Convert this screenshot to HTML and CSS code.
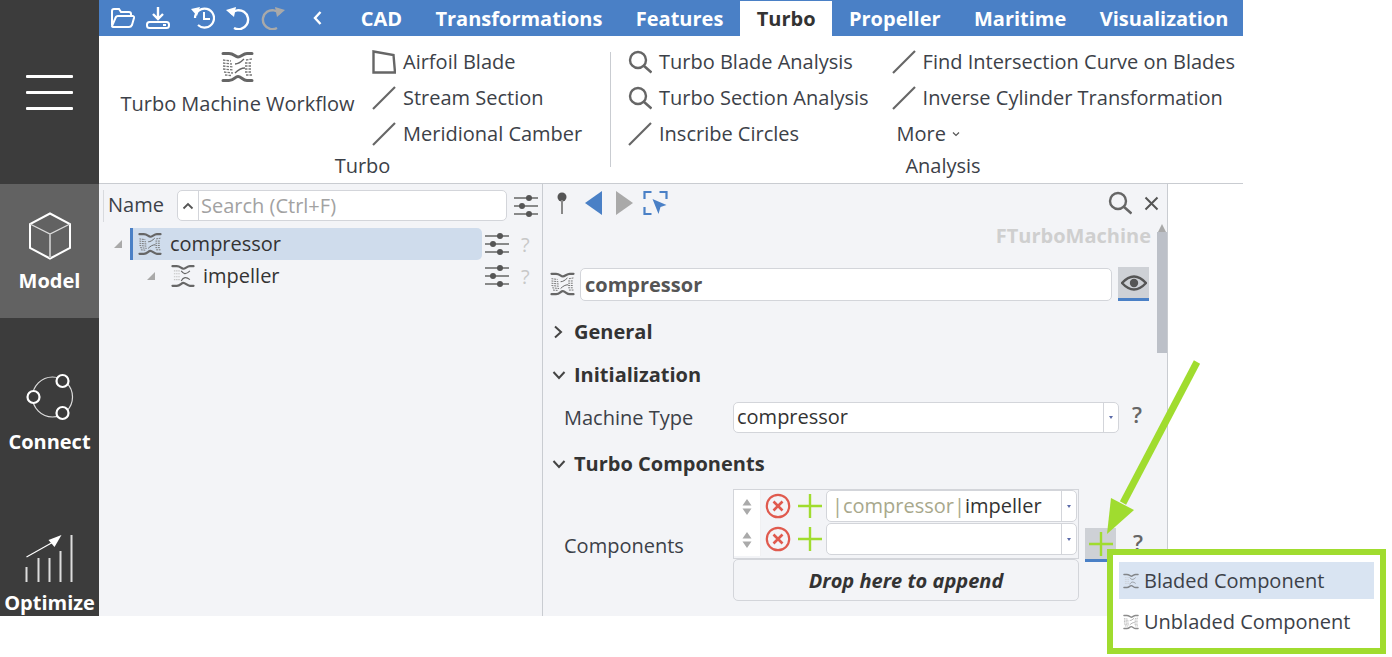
FILE: index.html
```html
<!DOCTYPE html>
<html lang="en">
<head>
<meta charset="utf-8">
<title>Turbo</title>
<link rel="stylesheet" href="styles.css">
</head>
<body>
<svg class="defs" width="0" height="0" aria-hidden="true">
  <symbol id="blade" viewBox="0 0 33 32">
    <path d="M2 2.500h6c5 0 6 3.500 9 3.500s5-3.500 9-3.500h5M2 29.500h6c5 0 6-4 9-4s5 4 9 4h5" fill="none" stroke="#666" stroke-width="3" stroke-linecap="round"/>
    <path d="M2 9l8 1M2 12l9 1M2 15l10 1M2 18l10 1M3 21l9 1M4 24l6 .5M25 9l6-1M24 12l7 0M24 15l7 0M24 18l7 0M24 21l7 0M25 24l6 0" fill="none" stroke="#777" stroke-width="1.300" stroke-dasharray="2.500 1"/>
    <path d="M14 13c3 0 6-2 9-5M14 22c3-3 6-5 10-5" fill="none" stroke="#666" stroke-width="1.300"/>
  </symbol>
  <symbol id="blade2" viewBox="0 0 33 32">
    <path d="M2 2.500h6c5 0 6 3.500 9 3.500s5-3.500 9-3.500h5M2 29.500h6c5 0 6-4 9-4s5 4 9 4h5" fill="none" stroke="#666" stroke-width="3" stroke-linecap="round"/>
    <path d="M4 9h8M4 13h9M4 17h9M4 21h8" fill="none" stroke="#c4c4c4" stroke-width="1.500" stroke-dasharray="2 1"/>
    <path d="M14 9c3 4 6 6 12 0M14 23c3-6 7-6 12-2" fill="none" stroke="#666" stroke-width="1.500"/>
  </symbol>
  <symbol id="line" viewBox="0 0 24 24"><path d="M1 23 23 1" stroke="#666" stroke-width="2.200" fill="none"/></symbol>
  <symbol id="lens" viewBox="0 0 24 24"><circle cx="10" cy="10" r="8" fill="none" stroke="#666" stroke-width="2.400"/><path d="m15.500 15.500 8 7" stroke="#666" stroke-width="2.600" fill="none"/></symbol>
  <symbol id="sliders" viewBox="0 0 24 24"><path d="M0 4h24M0 12h24M0 20h24" stroke="#666" stroke-width="1.600"/><circle cx="15" cy="4" r="3" fill="#555"/><circle cx="8" cy="12" r="3" fill="#555"/><circle cx="15" cy="20" r="3" fill="#555"/></symbol>
  <symbol id="remove" viewBox="0 0 26 26"><circle cx="13" cy="13" r="11.200" fill="none" stroke="#e05a4e" stroke-width="2.200"/><path d="m8.500 8.500 9 9m0-9-9 9" stroke="#e05a4e" stroke-width="2.600"/></symbol>
  <symbol id="plus" viewBox="0 0 26 26"><path d="M13 1v24M1 13h24" stroke="#a0dc2f" stroke-width="2.400"/></symbol>
  <symbol id="updown" viewBox="0 0 12 18"><path d="M6 1 10.500 7.500H1.500ZM6 17 1.500 10.500H10.500Z" fill="#aaa"/></symbol>
</svg>

<div class="app">
  <aside class="rail">
    <div class="rail-menu"><span class="bar"></span><span class="bar"></span><span class="bar"></span></div>
    <div class="rail-item active">
      <svg class="rail-icon" width="46" height="48" viewBox="0 0 46 48"><path d="M23 1.500 43 12V36L23 46.500 3 36V12Z" fill="none" stroke="#fff" stroke-width="2"/><path d="M3 12 23 22 43 12" fill="none" stroke="#ddd" stroke-width="1.300"/><path d="M23 22v24" stroke="#bbb" stroke-width="2"/></svg>
      <span class="rail-label">Model</span>
    </div>
    <div class="rail-item connect">
      <svg class="rail-icon" width="50" height="50" viewBox="0 0 50 50"><circle cx="27.500" cy="24" r="20" fill="none" stroke="#ddd" stroke-width="1.200"/><circle cx="37.500" cy="8" r="6" fill="#3c3c3c" stroke="#fff" stroke-width="2.200"/><circle cx="8.500" cy="24" r="6" fill="#3c3c3c" stroke="#fff" stroke-width="2.200"/><circle cx="37.500" cy="40" r="6" fill="#3c3c3c" stroke="#fff" stroke-width="2.200"/></svg>
      <span class="rail-label">Connect</span>
    </div>
    <div class="rail-item optimize">
      <svg class="rail-icon" width="50" height="48" viewBox="0 0 50 48"><path d="M1.500 33V48M13.500 24V48M24.500 24V48M35.500 17V48M46.500 1V48" stroke="#ddd" stroke-width="2"/><path d="M1.500 23 30 7" stroke="#fff" stroke-width="1.200"/><path d="M36.500 1 23.500 6 29.500 13Z" fill="#fff"/></svg>
      <span class="rail-label">Optimize</span>
    </div>
  </aside>

  <div class="main">
    <header class="topbar">
      <div class="quick">
        <svg width="24" height="20" viewBox="0 0 24 20"><path d="M1 17V3q0-2 2-2h5l2 3h8q2 0 2 2v2M1 18q0 1 2 1h15q2 0 3-2l2-7q.3-2-1.500-2H7q-2 0-2.500 2Z" fill="none" stroke="#fff" stroke-width="2"/></svg>
        <svg class="q-gap1" width="24" height="22" viewBox="0 0 24 22"><path d="M12 0v11M7 7l5 5 5-5" fill="none" stroke="#fff" stroke-width="2.400"/><rect x="1" y="15" width="22" height="6" rx="2.500" fill="none" stroke="#fff" stroke-width="2"/><path d="M17 18h3" stroke="#fff" stroke-width="2"/></svg>
        <svg class="q-gap2" width="24" height="24" viewBox="0 0 24 24"><path d="M4 12a9.500 9.500 0 1 1 3 7" fill="none" stroke="#fff" stroke-width="2.200"/><path d="M0 3 9 1 6 10Z" fill="#fff"/><path d="M13 6v7h6" fill="none" stroke="#fff" stroke-width="2"/></svg>
        <svg class="q-gap3" width="24" height="24" viewBox="0 0 24 24"><path d="M5 8a9.500 9.500 0 1 1 3 14" fill="none" stroke="#fff" stroke-width="2.400"/><path d="M0 4 10 1 8 11Z" fill="#fff"/></svg>
        <svg class="q-gap3" width="24" height="24" viewBox="0 0 24 24"><path d="M19 8a9.500 9.500 0 1 0-3 14" fill="none" stroke="#a9a9a9" stroke-width="2.400"/><path d="M24 4 14 1 16 11Z" fill="#a9a9a9"/></svg>
        <svg class="q-gap4" width="9" height="14" viewBox="0 0 9 14"><path d="M7.500 1 2 7l5.500 6" fill="none" stroke="#fff" stroke-width="2.400"/></svg>
      </div>
      <nav class="tabs">
        <span class="tab">CAD</span>
        <span class="tab">Transformations</span>
        <span class="tab">Features</span>
        <span class="tab current">Turbo</span>
        <span class="tab">Propeller</span>
        <span class="tab">Maritime</span>
        <span class="tab">Visualization</span>
      </nav>
    </header>

    <section class="ribbon">
      <div class="group group-turbo">
        <div class="group-body">
          <div class="big-tool">
            <svg class="big-icon" width="33" height="32"><use href="#blade"/></svg>
            <span>Turbo Machine Workflow</span>
          </div>
          <ul class="tools">
            <li><svg width="24" height="24" viewBox="0 0 24 24"><path d="M1.500 1.500 21.500 5 23 22.500H1.500Z" fill="none" stroke="#666" stroke-width="2.400"/></svg>Airfoil Blade</li>
            <li><svg width="24" height="24"><use href="#line"/></svg>Stream Section</li>
            <li><svg width="24" height="24"><use href="#line"/></svg>Meridional Camber</li>
          </ul>
        </div>
        <div class="group-label">Turbo</div>
      </div>
      <span class="group-sep"></span>
      <div class="group group-analysis">
        <div class="group-body">
          <ul class="tools">
            <li><svg width="24" height="24"><use href="#lens"/></svg>Turbo Blade Analysis</li>
            <li><svg width="24" height="24"><use href="#lens"/></svg>Turbo Section Analysis</li>
            <li><svg width="24" height="24"><use href="#line"/></svg>Inscribe Circles</li>
          </ul>
          <ul class="tools tools-b">
            <li><svg width="24" height="24"><use href="#line"/></svg>Find Intersection Curve on Blades</li>
            <li><svg width="24" height="24"><use href="#line"/></svg>Inverse Cylinder Transformation</li>
            <li class="more">More <svg width="8" height="6" viewBox="0 0 8 6"><path d="m1 1.500 3 3 3-3" fill="none" stroke="#555" stroke-width="1.200"/></svg></li>
          </ul>
        </div>
        <div class="group-label">Analysis</div>
      </div>
    </section>

    <section class="panes">
      <div class="tree-pane">
        <div class="tree-head">
          <span class="tree-name">Name</span>
          <div class="search">
            <span class="search-btn"><svg width="12" height="8" viewBox="0 0 12 8"><path d="m1.500 6.500 4.500-4.500 4.500 4.500" fill="none" stroke="#555" stroke-width="1.800"/></svg></span>
            <span class="search-text">Search (Ctrl+F)</span>
          </div>
          <svg width="24" height="24"><use href="#sliders"/></svg>
        </div>
        <div class="tree-row level0">
          <span class="tri"></span>
          <div class="tree-sel">
            <svg width="24" height="24"><use href="#blade"/></svg>
            <span class="tree-text">compressor</span>
          </div>
          <svg class="row-sliders" width="24" height="24"><use href="#sliders"/></svg>
          <span class="q">?</span>
        </div>
        <div class="tree-row level1">
          <span class="tri"></span>
          <div class="tree-plain">
            <svg width="24" height="24"><use href="#blade2"/></svg>
            <span class="tree-text">impeller</span>
          </div>
          <svg class="row-sliders" width="24" height="24"><use href="#sliders"/></svg>
          <span class="q">?</span>
        </div>
      </div>

      <div class="detail-pane">
        <div class="detail">
          <div class="d-toolbar">
            <svg width="10" height="22" viewBox="0 0 10 22"><circle cx="5" cy="5" r="4.500" fill="#555"/><path d="M5 8v14" stroke="#888" stroke-width="2"/></svg>
            <svg class="d-left" width="17" height="24" viewBox="0 0 17 24"><path d="M17 0V24L0 12Z" fill="#4a80c6"/></svg>
            <svg class="d-right" width="17" height="24" viewBox="0 0 17 24"><path d="M0 0V24L17 12Z" fill="#a9a9a9"/></svg>
            <svg class="d-select" width="25" height="24" viewBox="0 0 24 24"><path d="M1 8V1H8M16 1H23V8M1 16V23H8" fill="none" stroke="#4a80c6" stroke-width="2.200"/><path d="M9 8 23 14 17 16 15 23Z" fill="#4a80c6"/></svg>
            <span class="spacer"></span>
            <svg width="24" height="24"><use href="#lens"/></svg>
            <svg class="d-close" width="15" height="15" viewBox="0 0 15 15"><path d="m1.500 1.500 12 12m0-12-12 12" stroke="#555" stroke-width="2"/></svg>
          </div>
          <div class="class-name">FTurboMachine</div>
          <div class="name-row">
            <svg width="25" height="26"><use href="#blade"/></svg>
            <div class="name-input">compressor</div>
            <span class="eye-btn"><svg width="26" height="16" viewBox="0 0 26 16"><path d="M1 8q12-13 24 0-12 13-24 0Z" fill="none" stroke="#555" stroke-width="2.400"/><circle cx="13" cy="8" r="4.200" fill="#555"/></svg></span>
          </div>
          <div class="sec sec-general"><svg width="12" height="14" viewBox="0 0 12 14"><path d="m3 1.500 6 5.500-6 5.500" fill="none" stroke="#444" stroke-width="2"/></svg>General</div>
          <div class="sec sec-init"><svg width="14" height="12" viewBox="0 0 14 12"><path d="m1.500 3 5.500 6 5.500-6" fill="none" stroke="#444" stroke-width="2"/></svg>Initialization</div>
          <div class="field machine">
            <span class="field-label">Machine Type</span>
            <div class="combo">
              <span class="combo-text">compressor</span>
              <span class="combo-btn"><i class="caret"></i></span>
            </div>
            <span class="help">?</span>
          </div>
          <div class="sec sec-comp"><svg width="14" height="12" viewBox="0 0 14 12"><path d="m1.500 3 5.500 6 5.500-6" fill="none" stroke="#444" stroke-width="2"/></svg>Turbo Components</div>
          <div class="field comps">
            <span class="field-label">Components</span>
            <div class="list">
              <div class="list-table">
                <div class="list-row">
                  <span class="handle"><svg width="12" height="18"><use href="#updown"/></svg></span>
                  <svg class="ic-x" width="26" height="26"><use href="#remove"/></svg>
                  <svg class="ic-p" width="26" height="26"><use href="#plus"/></svg>
                  <div class="combo small">
                    <span class="combo-text"><span class="path">|compressor|</span>impeller</span>
                    <span class="combo-btn"><i class="caret"></i></span>
                  </div>
                </div>
                <div class="list-row">
                  <span class="handle"><svg width="12" height="18"><use href="#updown"/></svg></span>
                  <svg class="ic-x" width="26" height="26"><use href="#remove"/></svg>
                  <svg class="ic-p" width="26" height="26"><use href="#plus"/></svg>
                  <div class="combo small">
                    <span class="combo-text"></span>
                    <span class="combo-btn"><i class="caret"></i></span>
                  </div>
                </div>
              </div>
              <div class="drop">Drop here to append</div>
            </div>
            <div class="add-col">
              <span class="add-btn"><svg width="26" height="26"><use href="#plus"/></svg></span>
            </div>
            <span class="help help-comp">?</span>
          </div>
        </div>
        <div class="scroll">
          <i class="scroll-up"></i>
          <i class="scroll-thumb"></i>
        </div>
      </div>
    </section>
  </div>
</div>

<svg class="arrow" width="100" height="180" viewBox="0 0 100 180"><path d="M93 2 19 143" stroke="#a0dc2f" stroke-width="7" fill="none"/><path d="M3 174 7 138 30 150Z" fill="#a0dc2f"/></svg>

<div class="popup">
  <div class="pop-item hot"><svg class="pop-icon" width="16" height="16"><use href="#blade2"/></svg>Bladed Component</div>
  <div class="pop-item"><svg class="pop-icon" width="16" height="16"><use href="#blade"/></svg>Unbladed Component</div>
</div>
</body>
</html>
```
FILE: styles.css
```css
* { box-sizing: border-box; }
html, body { margin: 0; padding: 0; background: #fff; }
body {
  width: 1392px; height: 657px; overflow: hidden; position: relative;
  font-family: "Open Sans", "Liberation Sans", sans-serif;
  font-size: 20px; color: #3c4148;
}
.defs { position: absolute; }
svg { display: block; flex: none; }
ul { list-style: none; margin: 0; padding: 0; }

.app { display: flex; width: 1243px; height: 616px; }

.rail { width: 99px; flex: none; background: #3c3c3c; display: flex; flex-direction: column; color: #fff; }
.rail-menu { height: 184px; flex: none; display: flex; flex-direction: column; gap: 13.500px; align-items: center; padding-top: 75px; }
.bar { width: 47px; height: 2.500px; background: #fff; border-radius: 1px; }
.rail-item { display: flex; flex-direction: column; align-items: center; }
.rail-item.active { background: #626262; height: 134px; padding-top: 28px; }
.rail-item.active .rail-icon { margin-bottom: 7px; }
.rail-item.connect { height: 162px; padding-top: 55px; }
.rail-item.connect .rail-icon { margin-bottom: 5px; }
.rail-item.optimize { padding-top: 54px; flex: 1; }
.rail-item.optimize .rail-icon { margin-bottom: 7px; }
.rail-label { font-weight: 700; font-size: 20px; line-height: 27px; color: #fff; white-space: nowrap; }

.main { flex: 1; display: flex; flex-direction: column; min-width: 0; }

.topbar { height: 36px; background: #4a80c6; display: flex; align-items: stretch; flex: none; }
.quick { display: flex; align-items: center; padding-left: 12px; width: 245px; flex: none; }
.q-gap1 { margin-left: 11px; }
.q-gap2 { margin-left: 21px; }
.q-gap3 { margin-left: 11px; }
.q-gap4 { margin-left: 28px; }
.tabs { display: flex; align-items: stretch; }
.tab { color: #fff; font-weight: 700; font-size: 20px; line-height: 38px; padding: 0 16.700px; white-space: nowrap; }
.tab.current { background: #fff; color: #333; margin-top: 1px; line-height: 36px; }

.ribbon { height: 148px; flex: none; border-bottom: 1px solid #c9ccd1; display: flex; background: #fff; }
.group { display: flex; flex-direction: column; padding-top: 7px; }
.group-body { display: flex; height: 109px; }
.group-label { text-align: center; line-height: 27px; }
.group-turbo { width: 511px; flex: none; }
.group-turbo .group-label { padding-left: 16px; }
.group-sep { width: 1px; height: 115px; margin-top: 16px; background: #c9ccd1; flex: none; }
.group-analysis { flex: 1; }
.group-analysis .group-body { padding-left: 17px; }
.group-analysis .group-label { padding-left: 24px; width: 640px; }
.big-tool { width: 273px; flex: none; display: flex; flex-direction: column; align-items: center; padding: 8px 0 0 4px; }
.big-tool span { margin-top: 7px; line-height: 27px; white-space: nowrap; }
.tools li { height: 36px; display: flex; align-items: center; gap: 7px; white-space: nowrap; line-height: 27px; }
.tools li svg { margin-top: 2px; }
.tools-b { margin-left: 23px; }
.more { padding-left: 5px; gap: 6px !important; }

.panes { flex: 1; display: flex; min-height: 0; }
.tree-pane { width: 444px; flex: none; background: #f3f4f7; border-right: 1px solid #c9ccd1; }
.tree-head { display: flex; align-items: center; height: 37px; padding: 6px 0 0 4px; }
.tree-name { width: 74px; padding: 0 0 2px 4px; border-left: 1px solid #d8dade; line-height: 30px; }
.search { width: 330px; height: 31px; background: #fff; border: 1px solid #d3d5da; border-radius: 5px; display: flex; align-items: center; margin-right: 7px; }
.search-btn { width: 21px; height: 100%; border-right: 1px solid #d3d5da; display: flex; align-items: center; justify-content: center; }
.search-text { color: #a2a2a2; padding-left: 2px; }
.tree-row { display: flex; align-items: center; height: 32px; }
.level0 { margin-top: 7px; }
.tri { width: 0; height: 0; border-style: solid; border-width: 0 0 8px 8px; border-color: transparent transparent #a9a9a9 transparent; flex: none; }
.level0 .tri { margin-left: 15px; margin-right: 8px; }
.tree-sel { width: 352px; height: 32px; background: #cfdcec; border-left: 3px solid #4a80c6; border-radius: 0 5px 5px 0; display: flex; align-items: center; padding-left: 5px; gap: 8px; color: #333; }
.level1 .tri { margin-left: 48px; margin-right: 16px; }
.tree-plain { width: 311px; display: flex; align-items: center; gap: 8px; color: #333; }
.tree-text { padding-bottom: 2px; }
.row-sliders { margin-left: 3px; }
.q { color: #c8c8c8; margin-left: 12px; }

.detail-pane { width: 625px; flex: none; display: flex; background: #f3f4f7; border-right: 1px solid #c9ccd1; }
.detail { flex: 1; padding: 6px 0 0 7px; min-width: 0; }
.d-toolbar { display: flex; align-items: center; height: 26px; padding-left: 7px; margin-right: -2px; }
.d-left { margin-left: 18px; }
.d-right { margin-left: 14px; }
.d-select { margin-left: 10px; }
.spacer { flex: 1; }
.d-close { margin-left: 12px; }
.class-name { font-weight: 700; color: #cfcfcf; text-align: right; line-height: 27px; padding-right: 6px; margin-top: 6px; }
.name-row { display: flex; align-items: center; height: 34px; margin-top: 18px; }
.name-input { width: 532px; height: 33px; margin-left: 5px; background: #fff; border: 1px solid #d3d5da; border-radius: 5px; font-weight: 700; color: #555; line-height: 31px; padding-left: 4px; }
.eye-btn { width: 31px; height: 34px; margin-left: 6px; background: #ced1d6; border-bottom: 3px solid #4a80c6; display: flex; align-items: center; justify-content: center; }
.sec { display: flex; align-items: center; font-weight: 700; gap: 8px; color: #333; line-height: 27px; }
.sec svg { margin-left: 2px; }
.sec-general { margin-top: 17px; gap: 10px; }
.sec-init { margin-top: 16px; }
.sec-comp { margin-top: 17px; }
.field { display: flex; align-items: center; }
.field-label { width: 183px; padding-left: 14px; flex: none; color: #3c4148; }
.machine { margin-top: 14px; height: 31px; }
.combo { display: flex; background: #fff; border: 1px solid #d3d5da; border-radius: 5px; align-items: stretch; height: 31px; width: 386px; }
.combo-text { flex: 1; padding-left: 3px; line-height: 27px; color: #333; white-space: nowrap; overflow: hidden; }
.combo-btn { width: 15px; border-left: 1px solid #d3d5da; display: flex; align-items: center; justify-content: center; flex: none; }
.caret { width: 0; height: 0; border-style: solid; border-width: 3px 2.500px 0; border-color: #5a6aa8 transparent transparent; }
.help { margin-left: 13px; font-weight: 600; font-size: 22px; line-height: 30px; padding-bottom: 7px; color: #666; }
.comps { margin-top: 12px; align-items: flex-start; }
.comps .field-label { padding-top: 43px; }
.list { width: 346px; flex: none; }
.list-table { border: 1px solid #d3d5da; background: #f3f4f7; height: 70px; }
.list-row { display: flex; align-items: center; height: 33px; padding-bottom: 1px; }
.handle { width: 27px; height: 33px; margin-bottom: -1px; background: #fff; flex: none; display: flex; align-items: center; justify-content: center; border-right: 1px solid #f0f0f2; }
.ic-x { margin-left: 4px; }
.ic-p { margin-left: 6px; }
.combo.small { width: 251px; height: 32px; margin-left: 3px; }
.combo.small .combo-text { padding-left: 5px; line-height: 30px; }
.path { color: #a8a88c; }
.drop { height: 42px; border: 1px solid #d3d5da; border-radius: 5px; font-weight: 700; font-style: italic; text-align: center; line-height: 42px; font-size: 20px; color: #333; }
.add-col { padding-top: 39px; margin-left: 6px; flex: none; }
.add-btn { width: 31px; height: 34px; background: #ced1d6; border-bottom: 3px solid #4a80c6; display: flex; align-items: center; justify-content: center; }
.help-comp { padding: 38px 0 0; margin-left: 17px; }

.scroll { width: 10px; flex: none; display: flex; flex-direction: column; align-items: center; padding-top: 40px; }
.scroll-up { width: 0; height: 0; border-style: solid; border-width: 0 4px 8px; border-color: transparent transparent #a9a9a9; }
.scroll-thumb { width: 10px; height: 121px; background: #bcc0c8; }

.arrow { position: absolute; left: 1104px; top: 360px; }
.popup { position: absolute; left: 1107px; top: 549px; width: 279px; height: 105px; border: 6px solid #a0dc2f; background: #fff; padding: 7px 6px 0; }
.pop-item { height: 37px; display: flex; align-items: center; gap: 5px; padding-left: 4px; color: #3c4148; white-space: nowrap; }
.pop-item + .pop-item { margin-top: 4px; }
.pop-item.hot { background: #d9e4f2; }
.pop-icon { opacity: .75; }
```
